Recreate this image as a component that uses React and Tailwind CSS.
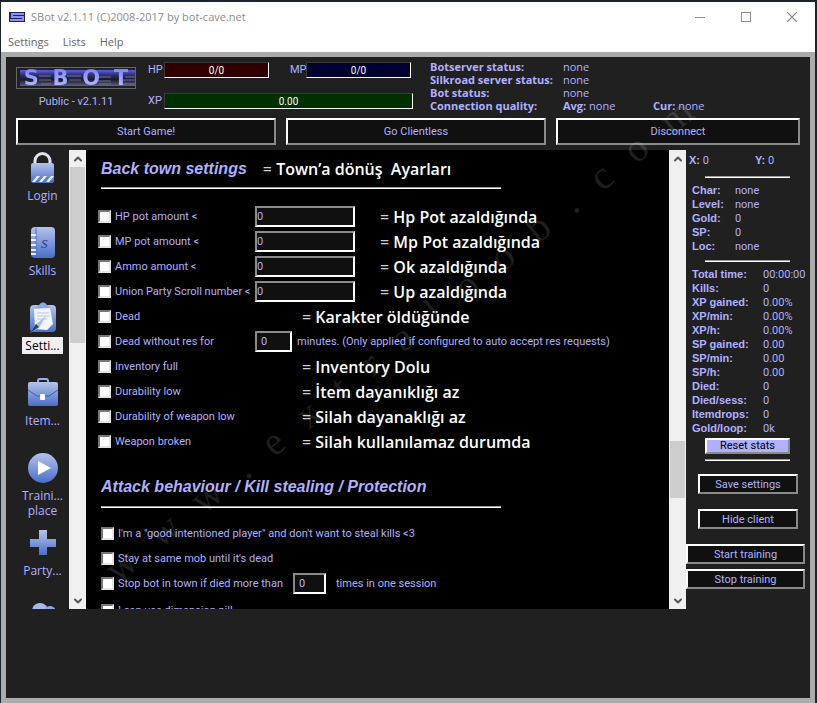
import React from 'react';
import { ChevronDown, ChevronUp, X } from 'lucide-react';

const backTown = [
  { id: 'hp', label: 'HP pot amount <', input: true, note: 'Hp Pot azaldığında' },
  { id: 'mp', label: 'MP pot amount <', input: true, note: 'Mp Pot azaldığında' },
  { id: 'ammo', label: 'Ammo amount <', input: true, note: 'Ok azaldığında' },
  { id: 'union', label: 'Union Party Scroll number <', input: true, note: 'Up azaldığında' },
  { id: 'dead', label: 'Dead', note: 'Karakter öldüğünde' },
  { id: 'nores', label: 'Dead without res for', minutes: true },
  { id: 'inv', label: 'Inventory full', note: 'Inventory Dolu' },
  { id: 'dura', label: 'Durability low', note: 'İtem dayanıklığı az' },
  { id: 'wdura', label: 'Durability of weapon low', note: 'Silah dayanaklığı az' },
  { id: 'broken', label: 'Weapon broken', note: 'Silah kullanılamaz durumda' }
];

const character = [
  ['Char:', 'none'],
  ['Level:', 'none'],
  ['Gold:', '0'],
  ['SP:', '0'],
  ['Loc:', 'none']
];

const stats = [
  ['Total time:', '00:00:00'],
  ['Kills:', '0'],
  ['XP gained:', '0.00%'],
  ['XP/min:', '0.00%'],
  ['XP/h:', '0.00%'],
  ['SP gained:', '0.00'],
  ['SP/min:', '0.00'],
  ['SP/h:', '0.00'],
  ['Died:', '0'],
  ['Died/sess:', '0'],
  ['Itemdrops:', '0'],
  ['Gold/loop:', '0k']
];

const LockIcon = () => (
  <svg viewBox="0 0 32 32" className="h-8 w-8" aria-hidden="true">
    <path d="M8 13V9a7 7 0 0 1 15 0v4" fill="none" stroke="#dfe5f5" strokeWidth="3" />
    <rect x="4" y="11" width="23" height="20" rx="2" fill="url(#blue)" />
    <path d="M5 30l5-6h3l-5 6zM12 30l5-6h3l-5 6zM19 30l5-6h3l-5 6z" fill="#eef2fc" />
  </svg>
);

const SkillsIcon = () => (
  <svg viewBox="0 0 32 32" className="h-8 w-8" aria-hidden="true">
    <rect x="4" y="0" width="24" height="31" rx="4" fill="url(#blue)" />
    <path d="M9 1v29" stroke="#4a6cb8" strokeWidth="1" />
    <path d="M4 8h5M4 13h5M4 18h5M4 23h5M4 27h5" stroke="#e6ecfa" strokeWidth="2" />
    <text x="14" y="21" fontSize="13" fontStyle="italic" fontFamily="Liberation Serif, serif" fill="#1f3c82">S</text>
  </svg>
);

const SettingsIcon = () => (
  <svg viewBox="0 0 32 32" className="h-8 w-8" aria-hidden="true">
    <rect x="3" y="3" width="26" height="27" rx="4" fill="url(#blue)" />
    <path d="M7 7l16-1 3 16-6 6-12-1z" fill="#f3f6fd" />
    <path d="M10 11h12M10 14h13M10 17h10" stroke="#b9c7ea" strokeWidth="1" />
    <path d="M9 6c0-3 3-2 4-4 1-2 5-2 6 0 1 2 4 1 4 4z" fill="#8ea6de" />
    <path d="M19 14L8 23l-5 8 9-5z" fill="#a9bdec" />
    <path d="M9 22l-6 9 9-6z" fill="#23427f" />
  </svg>
);

const BriefcaseIcon = () => (
  <svg viewBox="0 0 32 32" className="h-8 w-8" aria-hidden="true">
    <path d="M11 6V4q0-2 2-2h6q2 0 2 2v2" fill="none" stroke="#9bb0e2" strokeWidth="2" />
    <rect x="1" y="5" width="30" height="24" rx="2" fill="url(#blue)" />
    <path d="M1 13l9 6h12l9-6" fill="none" stroke="#3f5fae" strokeWidth="1" />
    <rect x="13" y="17" width="5" height="6" rx="1" fill="#fff" />
  </svg>
);

const PlayIcon = () => (
  <svg viewBox="0 0 32 32" className="h-8 w-8" aria-hidden="true">
    <circle cx="16" cy="16" r="15" fill="url(#blue)" />
    <path d="M11 9v14l13-7z" fill="#fff" />
  </svg>
);

const PlusIcon = () => (
  <svg viewBox="0 0 32 32" className="h-8 w-8" aria-hidden="true">
    <path d="M12 3h8v9h9v8h-9v8h-8v-8H3v-8h9z" fill="url(#blue)" />
  </svg>
);

const CloudIcon = () => (
  <svg viewBox="0 0 32 32" className="h-8 w-8" aria-hidden="true">
    <circle cx="13" cy="9" r="8" fill="#a9b9e8" />
    <circle cx="23" cy="10" r="6" fill="#93a8e0" />
    <path d="M5 10h24v12H5z" fill="#a9b9e8" />
  </svg>
);

const tabs = [
  { label: 'Login', icon: LockIcon },
  { label: 'Skills', icon: SkillsIcon },
  { label: 'Setti...', icon: SettingsIcon, active: true },
  { label: 'Item...', icon: BriefcaseIcon },
  { label: 'Traini... place', icon: PlayIcon },
  { label: 'Party...', icon: PlusIcon },
  { label: '', icon: CloudIcon }
];

const bevel = 'border-2 border-t-white border-l-white border-r-[#8a8a8a] border-b-[#8a8a8a]';

const Button = ({ className, children }) => (
  <button type="button" className={`${bevel} flex items-center justify-center bg-[#101010] pt-0.5 ${className}`}>
    {children}
  </button>
);

const Bar = ({ label, value, className, color }) => (
  <div className={`flex items-center gap-1 ${className}`}>
    <span className="w-3 shrink-0">{label}</span>
    <div className={`flex h-4 flex-1 items-center justify-center border border-t-[#3a3a3a] border-l-[#3a3a3a] border-r-white border-b-white pt-px text-[10px] text-white ${color}`}>
      {value}
    </div>
  </div>
);

const NumberBox = ({ id, label, className }) => (
  <input
    id={id}
    type="text"
    aria-label={label}
    defaultValue="0"
    className={`h-[21px] border-2 border-t-[#8a8a8a] border-l-[#8a8a8a] border-r-white border-b-white bg-[#101010] ${className}`}
  />
);

const Check = ({ id, label, className }) => (
  <div className={`flex items-center gap-1 ${className}`}>
    <input
      id={id}
      type="checkbox"
      className="h-[13px] w-[13px] shrink-0 appearance-none border-2 border-t-[#777] border-l-[#777] border-r-[#e4e4e4] border-b-[#e4e4e4] bg-white"
    />
    <label htmlFor={id} className="pt-0.5 whitespace-nowrap">{label}</label>
  </div>
);

const Note = ({ children, className }) => (
  <p className={`font-['Open_Sans',sans-serif] text-[16px] font-semibold whitespace-pre text-white ${className}`}>
    <span className="font-normal text-[#d0d0d0]">=</span> {children}
  </p>
);

const Rule = ({ className }) => (
  <hr className={`border-t border-b border-t-[#9a9a9a] border-b-white ${className}`} />
);

const ArrowButton = ({ icon: Icon, label }) => (
  <button type="button" aria-label={label} className="flex h-[17px] shrink-0 items-center justify-center text-[#555]">
    <Icon className="h-3 w-3" strokeWidth={4} />
  </button>
);

const StatTable = ({ rows, labelWidth }) => (
  <table className="ml-1.5 border-collapse text-[11px] leading-[13px]">
    <tbody>
      {rows.map(([name, value]) => (
        <tr key={name} className="h-[14px]">
          <th scope="row" className={`p-0 text-left align-baseline font-['Liberation_Sans',sans-serif] whitespace-nowrap ${labelWidth}`}>{name}</th>
          <td className="p-0 align-baseline">{value}</td>
        </tr>
      ))}
    </tbody>
  </table>
);

const TitleBar = () => (
  <header className="bg-white font-['Open_Sans',sans-serif] text-[#8c8c8c]">
    <div className="flex h-[30px] items-center pl-2">
      <svg viewBox="0 0 16 10" className="h-[10px] w-4" aria-hidden="true">
        <rect width="16" height="10" fill="#23234d" />
        <path d="M15 2H3v3h11v3H1" fill="none" stroke="#8c90ff" strokeWidth="2" />
      </svg>
      <h1 className="ml-1.5 flex-1 text-[11px]">SBot v2.1.11 (C)2008-2017 by bot-cave.net</h1>
      <button type="button" aria-label="Minimize" className="flex h-4 w-[46px] items-center justify-center">
        <span className="h-px w-2.5 bg-current"></span>
      </button>
      <button type="button" aria-label="Maximize" className="flex h-4 w-[46px] items-center justify-center">
        <span className="h-2.5 w-2.5 border border-current"></span>
      </button>
      <button type="button" aria-label="Close" className="flex h-4 w-[46px] items-center justify-center">
        <X className="h-[18px] w-[18px]" strokeWidth={1.5} />
      </button>
    </div>
    <nav className="flex h-5 items-center gap-3.5 pl-[7px] text-[11px] text-[#666]">
      <a href="#settings">Settings</a>
      <a href="#lists">Lists</a>
      <a href="#help">Help</a>
    </nav>
  </header>
);

const StatusPanel = () => (
  <div className="ml-[17px] flex-1 pt-[3px]">
    <dl className="grid grid-cols-[133px_1fr] font-['Open_Sans',sans-serif] text-[11px] leading-[13px]">
      <dt className="font-bold whitespace-nowrap">Botserver status:</dt>
      <dd>none</dd>
      <dt className="font-bold whitespace-nowrap">Silkroad server status:</dt>
      <dd>none</dd>
      <dt className="font-bold whitespace-nowrap">Bot status:</dt>
      <dd>none</dd>
      <dt className="font-bold whitespace-nowrap">Connection quality:</dt>
      <dd className="flex">
        <span className="w-[90px]"><b>Avg:</b> none</span>
        <span><b>Cur:</b> none</span>
      </dd>
    </dl>
  </div>
);

const Logo = () => (
  <div className="relative h-[22px] border border-[#666] bg-[#202020]">
    {/* Brushed metal streaks behind the letters */}
    <svg viewBox="0 0 118 20" preserveAspectRatio="none" className="h-full w-full" aria-hidden="true">
      <defs>
        <linearGradient id="streak" x1="0" y1="0" x2="0" y2="1">
          <stop offset="0" stopColor="#5b5ef0" />
          <stop offset="0.3" stopColor="#30326e" />
          <stop offset="0.6" stopColor="#1a1a24" />
          <stop offset="1" stopColor="#5c5f8c" />
        </linearGradient>
      </defs>
      <rect x="3" y="2" width="115" height="16" fill="url(#streak)" />
      <path d="M22 8h12M50 8h14M80 9h14M108 9h10M22 12h12M52 12h12M80 13h14M106 12h12M24 16h10M82 16h12M106 16h12" stroke="#6d7094" strokeWidth="1" />
    </svg>
    <div className="absolute inset-0 flex items-center justify-around font-['DejaVu_Sans',sans-serif] text-[21px] leading-[26px] font-bold">
      {['S', 'B', 'O', 'T'].map((letter) => (
        <span key={letter} className="bg-linear-to-b from-[#7476ff] to-[#c4c8f8] bg-clip-text text-transparent">{letter}</span>
      ))}
    </div>
  </div>
);

const TopPanel = () => (
  <div className="px-2.5">
    <div className="flex h-[61px]">
      <div className="w-[120px] pt-2.5 text-center">
        <Logo />
        <p className="mt-[5px]">Public - v2.1.11</p>
      </div>
      <div className="ml-3 flex w-[265px] flex-col gap-3.5 pt-[5px]">
        <div className="flex gap-[21px]">
          <Bar label="HP" value="0/0" color="bg-[#300000]" className="w-[121px]" />
          <Bar label="MP" value="0/0" color="bg-[#000030]" className="w-[121px]" />
        </div>
        <Bar label="XP" value="0.00" color="bg-[#003000]" className="w-full" />
      </div>
      <StatusPanel />
    </div>
    <div className="grid grid-cols-[260fr_260fr_244fr] gap-2.5">
      <Button className="h-[27px]">Start Game!</Button>
      <Button className="h-[27px]">Go Clientless</Button>
      <Button className="h-[27px]">Disconnect</Button>
    </div>
  </div>
);

const Sidebar = () => (
  <nav className="w-[63px] shrink-0 overflow-hidden pl-2.5">
    {tabs.map(({ label, icon: Icon, active }, index) => (
      <a key={index} href="#tab" className="flex h-[75px] flex-col items-center pt-0.5 font-['Open_Sans',sans-serif] text-[12px] leading-[15px]">
        <Icon />
        {label && (
          <span className={`mt-[3px] px-[3px] py-px text-center ${active ? 'bg-[#f0f0f0] text-black' : ''}`}>{label}</span>
        )}
      </a>
    ))}
  </nav>
);

const SettingsPage = () => (
  <main className="min-w-0 flex-1 overflow-hidden bg-black">
    <div className="pl-3">
      <div className="flex h-[37px] items-center pl-[3px]">
        <h2 className="font-['Liberation_Sans',sans-serif] text-[16px] font-bold italic">Back town settings</h2>
        <Note className="ml-4">{'Town’a dönüş  Ayarları'}</Note>
      </div>
      <Rule className="ml-[3px] w-[400px]" />
      <div className="pt-[15px]">
        {backTown.map(({ id, label, input, minutes, note }) => (
          <div key={id} className="flex h-[25px] items-center">
            <Check id={id} label={label} className="w-[157px] shrink-0" />
            {input && <NumberBox id={`${id}-value`} label={label} className="w-[100px]" />}
            {minutes && (
              <>
                <NumberBox id="minutes" label="Minutes" className="w-[37px] pl-1" />
                <label htmlFor="minutes" className="ml-[5px] pt-0.5 whitespace-nowrap">
                  minutes. (Only applied if configured to auto accept res requests)
                </label>
              </>
            )}
            {note && <Note className={input ? 'ml-[25px]' : 'ml-[47px]'}>{note}</Note>}
          </div>
        ))}
      </div>
      <h2 className="mt-6 ml-[3px] flex h-[18px] items-center font-['Liberation_Sans',sans-serif] text-[16px] font-bold italic">
        Attack behaviour / Kill stealing / Protection
      </h2>
      <Rule className="mt-2.5 ml-[3px] w-[400px]" />
      <div className="pt-[13px] pl-[3px]">
        <Check id="good" label={'I\'m a "good intentioned player" and don\'t want to steal kills <3'} className="h-[25px]" />
        <Check id="stay" label="Stay at same mob until it's dead" className="h-[25px]" />
        <div className="flex h-[25px] items-center">
          <Check id="stop" label="Stop bot in town if died more than" className="w-[192px]" />
          <NumberBox id="times" label="Times" className="w-[33px] pl-1" />
          <label htmlFor="times" className="ml-2.5 pt-0.5">times in one session</label>
        </div>
        <Check id="pill" label="I can use dimension pill" className="h-[29px]" />
      </div>
    </div>
  </main>
);

const RightPanel = () => (
  <aside className="w-[124px] shrink-0">
    <p className="flex h-[21px] items-center pl-[3px]">
      <span className="w-[66px]"><b className="font-['Liberation_Sans',sans-serif]">X:</b> 0</span>
      <span><b className="font-['Liberation_Sans',sans-serif]">Y:</b> 0</span>
    </p>
    <Rule className="mt-[5px] mb-1.5 ml-[19px] w-[85px]" />
    <StatTable rows={character} labelWidth="w-[43px]" />
    <Rule className="my-1.5 ml-[19px] w-[85px]" />
    <StatTable rows={stats} labelWidth="w-[71px]" />
    <button type="button" className={`${bevel} mt-0.5 ml-[19px] flex h-4 w-[85px] items-center justify-center bg-[#b0b0ff] pt-px text-black`}>
      Reset stats
    </button>
    <Rule className="mt-[5px] ml-[19px] w-[85px]" />
    <Button className="mt-[13px] ml-3 h-5 w-[100px]">Save settings</Button>
    <Button className="mt-[15px] ml-3 h-5 w-[100px]">Hide client</Button>
    <Button className="mt-[15px] h-5 w-[119px]">Start training</Button>
    <Button className="mt-[5px] h-5 w-[119px]">Stop training</Button>
  </aside>
);

const Watermark = () => (
  <div
    aria-hidden="true"
    className="pointer-events-none absolute top-[253px] left-[21px] flex w-[744px] -rotate-[39deg] items-center justify-between font-['Liberation_Serif',serif] text-[40px] text-white/12"
  >
    {'www.extraloob.com'.split('').map((letter, index) => (
      <span key={index}>{letter}</span>
    ))}
  </div>
);

const App = () => {
  return (
    <div className="h-screen overflow-hidden bg-[#1b2530] pt-0.5 pr-0.5 pl-px">
      {/* Gradient shared by the sidebar icons */}
      <svg className="absolute h-0 w-0" aria-hidden="true">
        <linearGradient id="blue" x1="0" y1="0" x2="0" y2="1">
          <stop offset="0" stopColor="#b4c3ea" />
          <stop offset="1" stopColor="#4a6fc8" />
        </linearGradient>
      </svg>

      <div className="flex h-full flex-col">
        <TitleBar />
        <div className="relative flex min-h-0 flex-1 flex-col border-[5px] border-[#ababab] bg-[#202020] pb-[89px] font-[Roboto,sans-serif] text-[11px] text-[#b0b0ff]">
          <TopPanel />

          <div className="mt-[5px] flex min-h-0 flex-1">
            <Sidebar />
            {/* Sidebar scrollbar */}
            <div className="flex w-[17px] shrink-0 flex-col bg-[#f0f0f0]">
              <ArrowButton icon={ChevronUp} label="Scroll tabs up" />
              <div className="mx-px h-[176px] bg-[#cdcdcd]"></div>
              <div className="flex-1"></div>
              <ArrowButton icon={ChevronDown} label="Scroll tabs down" />
            </div>
            <SettingsPage />
            {/* Page scrollbar */}
            <div className="flex w-[17px] shrink-0 flex-col bg-[#f0f0f0]">
              <ArrowButton icon={ChevronUp} label="Scroll page up" />
              <div className="grow-[274]"></div>
              <div className="mx-px h-[57px] bg-[#cdcdcd]"></div>
              <div className="grow-[94]"></div>
              <ArrowButton icon={ChevronDown} label="Scroll page down" />
            </div>
            <RightPanel />
          </div>

          <Watermark />
        </div>
      </div>
    </div>
  );
};

export default App;
